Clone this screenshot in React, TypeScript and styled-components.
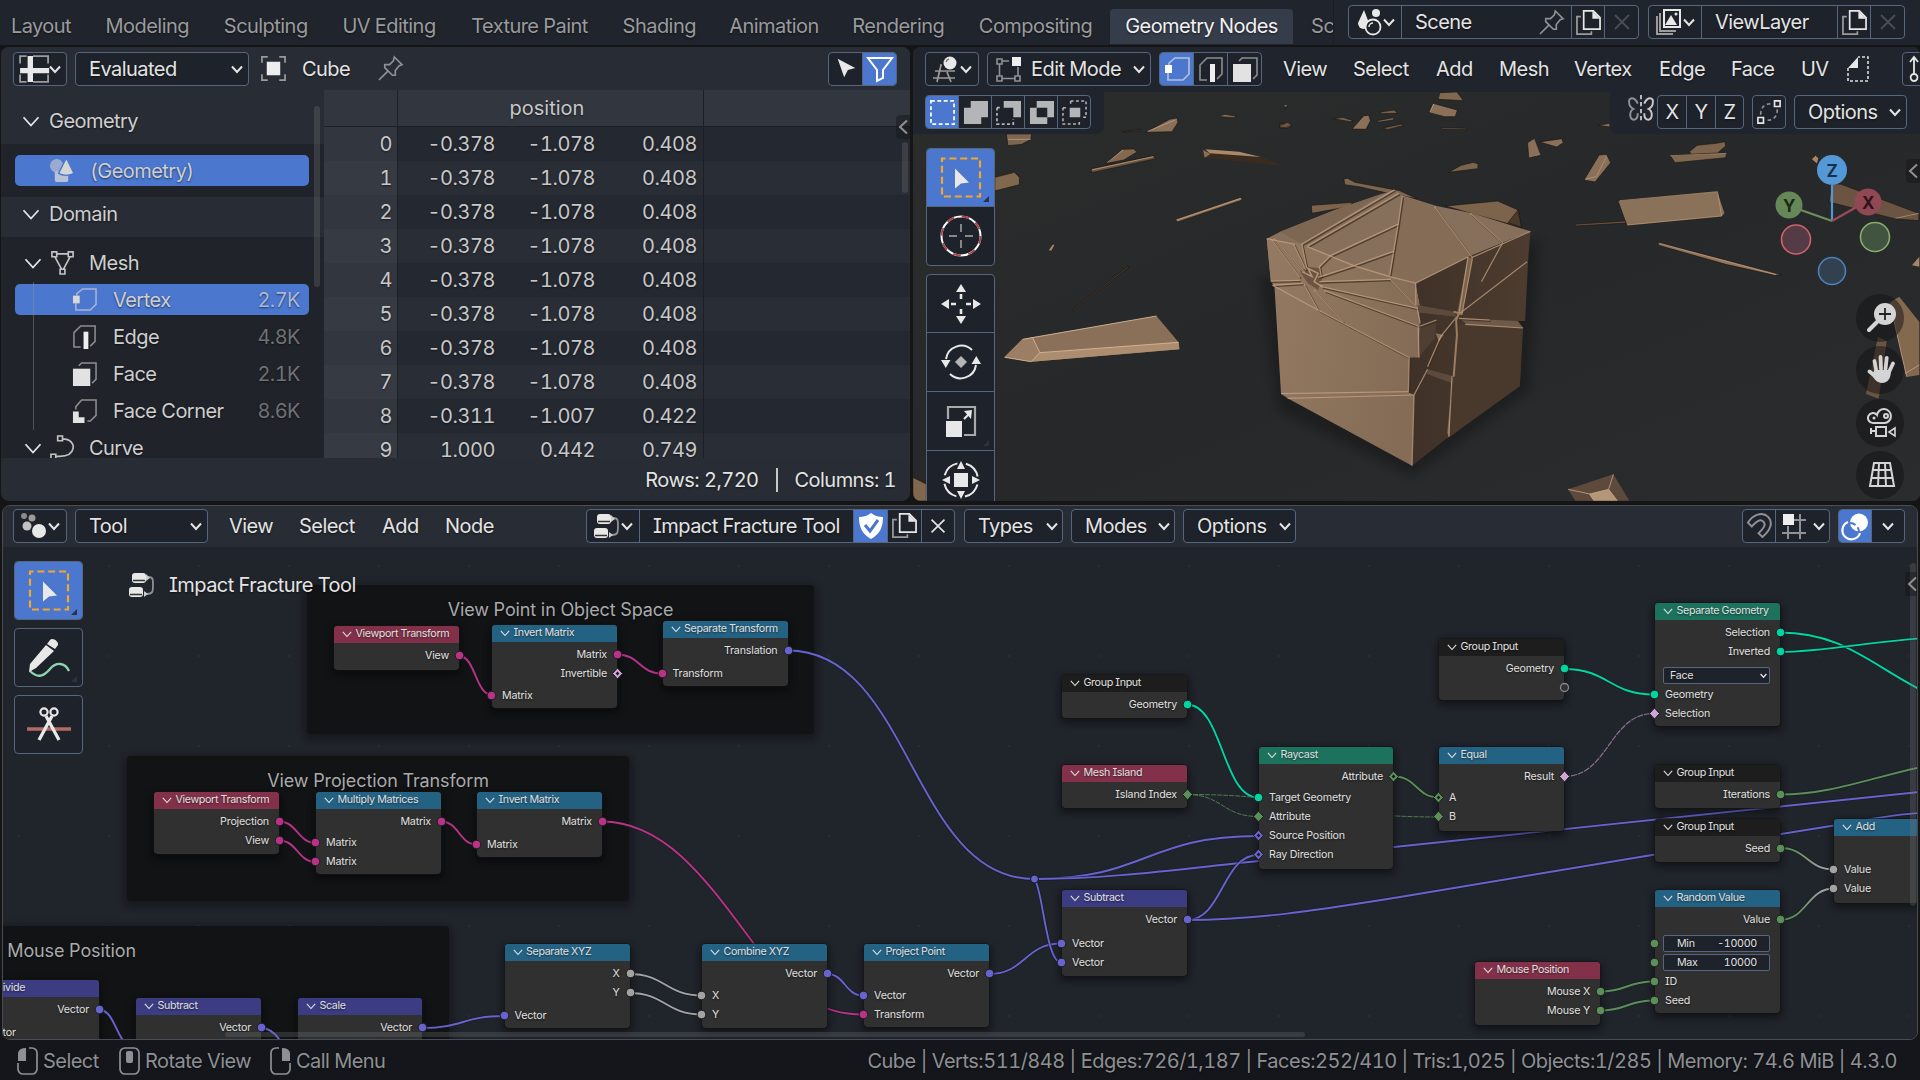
import React from "react";
import styled, { createGlobalStyle, css } from "styled-components";

const c = {
  gap: "#151515",
  bar: "#20242c",
  header: "#282c34",
  field: "#1e222a",
  line: "#56667e",
  blue: "#4b77cf",
  text: "#e4e4e4",
  dim: "#9a9b9d",
};

const Global = createGlobalStyle`
  html, body { margin: 0; background: ${c.gap}; }
  * { box-sizing: border-box; letter-spacing: -0.027em; }
  body { font-family: Inter, "Liberation Sans", sans-serif; font-feature-settings: "cv08"; font-variant-numeric: tabular-nums; font-size: 20px; color: ${c.text}; overflow: hidden; }
  svg { display: block; flex: none; }
`;

/* ---------- Layout ---------- */
const Screen = styled.div`
  width: 1920px; height: 1080px; overflow: hidden; background: ${c.gap};
  display: grid; grid-template-rows: 45px 2px 454px 4px 535px 40px;
  white-space: nowrap; text-shadow: 0 1px 2px rgba(0, 0, 0, 0.55);
`;
const TopBar = styled.header`
  grid-row: 1; display: flex; background: ${c.bar};
`;
const Tabs = styled.nav`
  display: flex; width: 1334px; padding-top: 9px; overflow: hidden; border-right: 1px solid #1a1d23;
`;
const Tab = styled.div<{ $w: number; $on?: boolean; $pr?: number }>`
  flex: none; width: ${p => p.$w}px; height: 35px; display: flex; align-items: center; justify-content: center;
  padding: 0 ${p => p.$pr ?? 0}px 1px 0;
  color: ${p => (p.$on ? "#f2f2f2" : c.dim)}; background: ${p => (p.$on ? "#353c4a" : "transparent")};
  border-radius: 4px 4px 0 0;
`;
const Row2 = styled.main`
  grid-row: 3; display: grid; grid-template-columns: 909px 1007px; column-gap: 3px; padding-left: 1px;
`;
const Editor = styled.section`
  border-radius: 8px; overflow: hidden; display: flex; flex-direction: column; background: ${c.header}; position: relative;
`;
const Header = styled.div<{ $h: number; $pl?: number; $bg?: string }>`
  height: ${p => p.$h}px; flex: none; display: flex; align-items: center; padding-left: ${p => p.$pl ?? 12}px;
  background: ${p => p.$bg ?? c.header};
`;

/* ---------- Controls ---------- */
const Group = styled.div<{ $ml?: number }>`
  display: flex; flex: none; height: 34px; margin-left: ${p => p.$ml ?? 0}px; border-radius: 4px; overflow: hidden;
  border: 1px solid ${c.line}; background: ${c.field};
`;
const Seg = styled.div<{ $w: number; $on?: boolean; $start?: number; $off?: boolean }>`
  width: ${p => p.$w}px; flex: none; display: flex; align-items: center; justify-content: ${p => (p.$start ? "flex-start" : "center")};
  padding-left: ${p => p.$start ?? 0}px; gap: 2px; background: ${p => (p.$on ? c.blue : "transparent")};
  color: ${c.text};
  & + & { border-left: 1px solid ${c.line}; }
  ${p => p.$off && css`color: #4a4e55;`}
`;
const Push = styled.span<{ $r: number }>`margin-left: auto; margin-right: ${p => p.$r}px;`;
const MenuItem = styled.div<{ $w: number }>`width: ${p => p.$w}px; flex: none;`;
const Space = styled.div<{ $w: number }>`width: ${p => p.$w}px; flex: none;`;

const Chev = ({ s = 12, w = 2 }: { s?: number; w?: number }) => (
  <svg width={s} height={s} viewBox="0 0 12 12" fill="none" stroke="#e4e4e4" strokeWidth={w}><path d="M1 3.5 6 9l5-5.5" /></svg>
);

const ico: Record<string, React.ReactNode> = {
  sheet: <><path d="M1 8V1h6M13 1h14v7M1 18v7h6M13 25h14v-7" stroke="#9b9b9b" fill="none" strokeWidth="1.7" /><path d="M8 1h5v24H8zM1 12h27v5H1z" fill="#e8e8e8" /></>,
  object: <><path d="M1 7V1h6M19 1h6v6M25 19v6h-6M7 25H1v-6" stroke="#9b9b9b" fill="none" strokeWidth="1.8" /><path d="M6 6h14v14H6z" fill="#eee" /></>,
  pin: <path d="m17 1 8 8-3 1-4 5 0 5-3 0-8-8 0-3 5 0 4-4zM10 16l-9 9" stroke="#8f9196" fill="none" strokeWidth="1.7" />,
  cursor: <path d="M4 2 23 12l-8 2-4 8z" fill="#e8e8e8" />,
  filter: <path d="M1 2h24l-9 12v8l-6 3V14z" fill="none" stroke="#fff" strokeWidth="2" />,
  vertex: <><path d="M5 9V7l6-5h14v16l-6 6H4v-7" fill="none" stroke="#b9c1d6" strokeWidth="1.6" /><path d="M1 9h7v8H1z" fill="#fff" /></>,
  vertexOut: <><path d="M5 9V7l6-5h14v16l-6 6H4v-7" fill="none" stroke="#a4b4d8" strokeWidth="1.6" /><path d="M1 9h7v8H1z" fill="#d8d8d8" /></>,
  edge: <><path d="M9 24H2V9l7-7h15v16l-5 5" fill="none" stroke="#8d8d90" strokeWidth="1.6" /><path d="M12 8h5v18h-5z" fill="#eee" /></>,
  face: <><path d="M7 5l3-3h15v17l-4 4" fill="none" stroke="#8d8d90" strokeWidth="1.6" /><path d="M1 8h18v18H1z" fill="#e2e2e2" /></>,
  corner: <><path d="M4 12V9l6-7h15v16l-6 6h-3" fill="none" stroke="#8d8d90" strokeWidth="1.6" /><path d="M1 14h6v6h6v6H1z" fill="#e2e2e2" /></>,
  mesh: <path d="M2 2h5v5H2zM19 2h5v5h-5zM10.500 20h5v5h-5zM7 4h12M5 7l7 13M21 7l-7 13" fill="none" stroke="#c4c4c4" strokeWidth="1.7" />,
  curve: <path d="M8 1h5v5H8zM1 20h5v5H1zM13 4c8 0 12 5 11 10-1 6-6 9-18 8" fill="none" stroke="#c4c4c4" strokeWidth="1.7" />,
  geometry: <><circle cx="8" cy="8" r="7" fill="#9aaad0" /><path d="M6 14h14v9a2 2 0 0 1-2 2H8a2 2 0 0 1-2-2z" fill="#b9c1d8" /><path d="m18 0 8 16q-3 2-8 2t-8-2z" fill="#d6d6d4" stroke={c.blue} strokeWidth="1.400" /></>,
  view3d: <><path d="M3 15h20M1 22h22M9 9 5 26M15 16l4 10M8 9h2" stroke="#9b9b9b" fill="none" strokeWidth="1.7" /><circle cx="18" cy="7" r="6.500" fill="#e8e8e8" /><path d="M14 6a4 4 0 0 1 3-3" stroke="#444" fill="none" /></>,
  editmode: <><path d="M1 3h5v5H1zM1 20h5v5H1zM19 20h5v5h-5zM3.500 8v12M6 22.500h13M22 11v9M6 5h7" fill="none" stroke="#8f9196" strokeWidth="1.600" /><path d="M16 1h9v9h-9z" fill="#eee" /></>,
  scene: <><path d="M9 1l5 13a5.500 6 0 1 1-11 0z" fill="#e8e8e8" /><circle cx="21" cy="4" r="4" fill="#e8e8e8" /><circle cx="18" cy="18" r="7.500" fill="#1e222a" stroke="#e8e8e8" strokeWidth="1.800" /><path d="M14 18a4 4 0 0 1 4-4" stroke="#e8e8e8" fill="none" strokeWidth="1.500" /></>,
  layers: <><path d="M2 7v18h16M5 4v18h16" fill="none" stroke="#9b9b9b" strokeWidth="2" /><path d="M9 1h16v17H9z" fill="none" stroke="#e8e8e8" strokeWidth="2" /><path d="m10 16 6-10 6 10z" fill="#e8e8e8" /><circle cx="21" cy="5" r="1.500" fill="#e8e8e8" /></>,
  copy: <><path d="M5 7H1v18h15v-3" fill="none" stroke="#9b9b9b" strokeWidth="1.800" /><path d="M8 1h10l7 7v12H8z" fill="none" stroke="#e8e8e8" strokeWidth="1.800" /><path d="M17 1l8 8h-8z" fill="#e8e8e8" /></>,
  close: <path d="m6 6 14 14M20 6 6 20" stroke="currentColor" strokeWidth="1.800" />,
  mirror: <><path d="M10 8C7 1 1 2 2 7c0 4 2 5 4 6-4 2-4 9 0 10 3 0 4-3 4-6" fill="none" stroke="#8f9196" strokeWidth="1.800" /><path d="M16 8c3-7 9-6 8-1 0 4-2 5-4 6 4 2 4 9 0 10-3 0-4-3-4-6" fill="none" stroke="#c9c9c9" strokeWidth="1.800" /><path d="M13 0v26" stroke="#ddd" strokeWidth="1.500" strokeDasharray="4 2.500" /></>,
  prop: <><path d="M19 1h6v6h-6zM1 19h6v6H1z" fill="none" stroke="#e8e8e8" strokeWidth="1.800" /><path d="M4 16C4 8 8 4 16 4M22 10c0 8-4 12-12 12" fill="none" stroke="#8f9196" strokeWidth="1.800" strokeDasharray="4 3" /></>,
  fold: <><path d="M2 12 12 1v11z" fill="#e8e8e8" /><path d="M2 12v13h20V1H12" fill="none" stroke="#ddd" strokeWidth="1.600" strokeDasharray="3 2" /></>,
  up: <path d="M9 18V1M5 6l4-5 4 5M9 18a3.500 3.500 0 1 0 .1 0" fill="none" stroke="#e8e8e8" strokeWidth="1.800" />,
  selNew: <path d="M1 1h24v24H1z" fill="none" stroke="#fff" strokeWidth="1.800" strokeDasharray="4 2.660" />,
  selAdd: <path d="M8 1h18v17h-7v7H1V8h7z" fill="#b4b5b7" />,
  selSub: <><path d="M8 1h18v17h-8V8H8z" fill="#b4b5b7" /><path d="M1 8h5M1 8v17h17v-5" fill="none" stroke="#b4b5b7" strokeWidth="1.800" strokeDasharray="3 2.500" /></>,
  selDiff: <path fillRule="evenodd" d="M8 1h18v17h-7v7H1V8h7zM8 8v10h11V8z" fill="#b4b5b7" />,
  selInt: <><path d="M8 8h11v10H8z" fill="#b4b5b7" /><path d="M9 1h16v17h-3M9 1v4M1 8h4M1 8v17h17v-4" fill="none" stroke="#b4b5b7" strokeWidth="1.600" strokeDasharray="3 2.500" /></>,
  nodes: <><rect x="4" y="1" width="14" height="10" rx="3" fill="#e8e8e8" /><rect x="1" y="15" width="14" height="10" rx="3" fill="#e8e8e8" /><path d="M5 8.500h12M2 22.500h12" stroke="#333" strokeWidth="1.600" /><path d="M20 5c5 0 5 2 5 8s0 9-6 9" fill="none" stroke="#8f9196" strokeWidth="1.800" /><path d="m18 2 4 4-4 3M16 19l4 3-4 3" fill="#ccc" /></>,
  dots: <><circle cx="4" cy="3" r="3" fill="#8a8a8c" /><circle cx="12" cy="5" r="3.500" fill="#9a9a9c" /><circle cx="7" cy="13" r="4.500" fill="#c2c2c2" /><circle cx="19" cy="18" r="7" fill="#e8e8e8" /></>,
  shield: <><path d="M13 0c4 3 8 4 12 4 0 10-3 17-12 22C4 21 1 14 1 4c4 0 8-1 12-4z" fill="#fff" /><path d="m7 12 5 6 8-11" fill="none" stroke={c.blue} strokeWidth="3" /></>,
  magnet: <path d="M1 10C6 2 16-2 22 4c6 7 2 14-6 21l-4-4c6-6 8-9 5-12-3-3-7-1-12 5z" fill="none" stroke="#8f9196" strokeWidth="2" />,
  snapgrid: <><path d="M7 13v13M19 1v25M1 20h24M13 7h12" stroke="#8f9196" strokeWidth="2" /><path d="M2 1h11v11H2z" fill="#eee" /></>,
  overlay: <><circle cx="17" cy="9.500" r="9" fill="#fff" /><path d="M6 9a9 9 0 1 0 12 11" fill="none" stroke="#fff" strokeWidth="2.200" /><path d="M8 10a9 9 0 0 1 9 9" stroke={c.blue} strokeWidth="2" fill="none" strokeDasharray="6 3" /></>,
};
const Icon = ({ n, s = 26 }: { n: string; s?: number }) => (
  <svg width={s} height={s} viewBox="0 0 26 26" overflow="visible">{ico[n]}</svg>
);

/* ---------- Spreadsheet ---------- */
const SheetBody = styled.div`height: 368px; display: grid; grid-template-columns: 323px 586px; overflow: hidden; position: relative;`;
const Side = styled.div`background: #20242a; overflow: hidden; position: relative;`;
const SecHead = styled.div<{ $h: number; $pt?: number; $pb?: number }>`
  height: ${p => p.$h}px; padding: ${p => p.$pt ?? 0}px 0 ${p => p.$pb ?? 0}px 21px; background: ${c.header}; display: flex; align-items: center; gap: 9px; color: #cfcfcf;
`;
const SecBody = styled.div<{ $h: number; $pt: number }>`height: ${p => p.$h}px; padding: ${p => p.$pt}px 15px 0 14px; position: relative;`;
const Item = styled.div<{ $on?: boolean; $pl: number; $gap: number }>`
  height: 31px; margin-bottom: 6px; border-radius: 5px; display: flex; align-items: center; padding: 0 9px 0 ${p => p.$pl}px; gap: ${p => p.$gap}px;
  background: ${p => (p.$on ? c.blue : "transparent")}; color: #cfcfcf;
`;
const TypeName = styled.span`margin-left: 6px;`;
const Count = styled.span<{ $on?: boolean }>`margin-left: auto; color: ${p => (p.$on ? "#a9b8da" : "#6f7175")};`;
const TreeLine = styled.i`position: absolute; left: 32px; top: 45px; width: 1px; height: 148px; background: rgba(150,150,150,0.4);`;
const ScrollBar = styled.i<{ $x: number; $y: number; $w: number; $h: number }>`
  position: absolute; left: ${p => p.$x}px; top: ${p => p.$y}px; width: ${p => p.$w}px; height: ${p => p.$h}px; border-radius: 3px; background: rgba(120,122,126,0.28);
`;
const Table = styled.div`display: grid; grid-auto-rows: 34px; grid-template-rows: 37px; overflow: hidden; color: #c8c8c8;`;
const TRow = styled.div<{ $alt?: boolean; $head?: boolean }>`
  display: grid; grid-template-columns: 74px 104px 100px 102px 206px; text-align: right; align-items: center;
  background: ${p => (p.$head ? "#32363f" : p.$alt ? "#292d35" : "#242830")};
  border-bottom: ${p => (p.$head ? "1px solid #1c1f25" : "0")};
  & > * { height: 100%; display: flex; align-items: center; justify-content: flex-end; padding-right: 7px; letter-spacing: -0.022em; }
  & > :first-child { background: ${p => (p.$head ? "#32363f" : p.$alt ? "#363a43" : "#32363f")}; border-right: 1px solid #1c1f25; padding-right: 5px; }
  & > :nth-child(4) { border-right: 1px solid #1c1f25; padding-right: 6px; }
`;
const HeadCell = styled.span`grid-column: 2 / 5; border-right: 1px solid #1c1f25; && { justify-content: center; padding-right: 7px; letter-spacing: 0; }`;
const SheetFoot = styled.div`height: 43px; display: flex; align-items: center; justify-content: flex-end; padding-right: 14px; gap: 17px;`;
const Bar = styled.i`width: 2px; height: 24px; background: #c8c8c8;`;
const Collapse = styled.div<{ $y: number; $r?: number }>`
  position: absolute; right: ${p => p.$r ?? 0}px; top: ${p => p.$y}px; width: 14px; height: 24px; border-radius: 4px 0 0 4px; background: rgba(20,20,22,0.45);
  display: flex; align-items: center; justify-content: center;
`;
const LeftChev = () => <svg width="10" height="16" viewBox="0 0 10 16"><path d="M9 1.500 2 8l7 6.500" fill="none" stroke="#8f9092" strokeWidth="2" /></svg>;

const ROWS = [
  ...Array.from({ length: 8 }, () => ["-0.378", "-1.078", "0.408"]),
  ["-0.311", "-1.007", "0.422"],
  ["1.000", "0.442", "0.749"],
];

const Spreadsheet = () => (
  <Editor>
    <Header $h={43}>
      <Group><Seg $w={52}><Icon n="sheet" s={28} /><Chev /></Seg></Group>
      <Group $ml={8}><Seg $w={172} $start={13}>Evaluated<Push $r={5}><Chev /></Push></Seg></Group>
      <Space $w={12} /><Icon n="object" s={25} /><Space $w={16} /><MenuItem $w={76}>Cube</MenuItem><Icon n="pin" s={25} />
      <Group $ml={425}><Seg $w={33}><Icon n="cursor" s={24} /></Seg><Seg $w={34} $on><Icon n="filter" s={26} /></Seg></Group>
    </Header>
    <SheetBody>
      <Side>
        <SecHead $h={54} $pt={8}><Chev s={18} w={1.2} />Geometry</SecHead>
        <SecBody $h={53} $pt={11}><Item $on $pl={34} $gap={16}><Icon n="geometry" s={25} />(Geometry)</Item></SecBody>
        <SecHead $h={40} $pb={6}><Chev s={18} w={1.2} />Domain</SecHead>
        <SecBody $h={240} $pt={10}>
          <Item $pl={9} $gap={8}><Chev s={18} w={1.2} /><Icon n="mesh" s={25} /><TypeName>Mesh</TypeName></Item>
          <Item $on $pl={57} $gap={16}><Icon n="vertexOut" s={25} />Vertex<Count $on>2.7K</Count></Item>
          <Item $pl={57} $gap={16}><Icon n="edge" s={25} />Edge<Count>4.8K</Count></Item>
          <Item $pl={57} $gap={16}><Icon n="face" s={25} />Face<Count>2.1K</Count></Item>
          <Item $pl={57} $gap={16}><Icon n="corner" s={25} />Face Corner<Count>8.6K</Count></Item>
          <Item $pl={9} $gap={8}><Chev s={18} w={1.2} /><Icon n="curve" s={25} /><TypeName>Curve</TypeName></Item>
          <TreeLine />
        </SecBody>
        <ScrollBar $x={313} $y={16} $w={6} $h={181} />
      </Side>
      <Table>
        <TRow $head><span /><HeadCell>position</HeadCell></TRow>
        {ROWS.map((r, i) => (
          <TRow key={i} $alt={i % 2 === 1}><span>{i}</span>{r.map((v, j) => <span key={j}>{v}</span>)}<span /></TRow>
        ))}
      </Table>
      <ScrollBar $x={901} $y={52} $w={6} $h={51} />
    </SheetBody>
    <SheetFoot>Rows: 2,720<Bar />Columns: 1</SheetFoot>
    <Collapse $y={68}><LeftChev /></Collapse>
  </Editor>
);

/* ---------- 3D viewport ---------- */
const ViewBody = styled.div`position: relative; flex: 1; overflow: hidden; background: #292a2b;`;
const SubBar = styled.div<{ $side: "left" | "right"; $w: number }>`
  position: absolute; top: 0; ${p => p.$side}: 0; width: ${p => p.$w}px; height: 42px; background: ${c.bar}; display: flex; padding: 3px 12px 0;
  border-radius: ${p => (p.$side === "left" ? "0 0 8px 0" : "0 0 0 8px")};
`;
const ToolColumn = styled.div<{ $x: number; $y: number }>`
  position: absolute; left: ${p => p.$x}px; top: ${p => p.$y}px; width: 69px; display: flex; flex-direction: column; gap: 8px;
`;
const ToolGroup = styled.div`border: 1px solid ${c.line}; border-radius: 4px; overflow: hidden; background: ${c.field};`;
const Tool = styled.div<{ $on?: boolean; $more?: boolean }>`
  height: 57px; display: flex; align-items: center; justify-content: center; position: relative; background: ${p => (p.$on ? c.blue : "transparent")};
  & + & { border-top: 1px solid ${c.line}; height: 59px; }
  ${p => p.$more && css`&::after { content: ""; position: absolute; right: 5px; bottom: 4px; border: 3px solid transparent; border-right-color: #2c3340; border-bottom-color: #2c3340; }`}
`;
const NavColumn = styled.div`position: absolute; left: 943px; top: 202px; display: grid; gap: 4.300px;`;
const NavBtn = styled.div`width: 48px; height: 48px; border-radius: 50%; background: rgba(18,18,20,0.5); display: grid; place-items: center; padding-left: 3px;`;
const SceneSvg = styled.svg`position: absolute; left: 0; top: 0; path, polyline, polygon { vector-effect: non-scaling-stroke; }`;

const SelectBox = () => (
  <svg width="44" height="44" viewBox="0 0 44 44"><rect x="3" y="2.500" width="38" height="38" fill="none" stroke="#f3a630" strokeWidth="2.200" strokeDasharray="7 3.857" strokeDashoffset="3.500" /><path d="M16 12.500 30 26.500l-8 1-6 5z" fill="#e8e8e8" /></svg>
);
const TOOLS: Record<string, React.ReactNode> = {
  cursor: <><circle cx="22" cy="22" r="19.500" fill="none" stroke="#fff" strokeWidth="2" /><circle cx="22" cy="22" r="19.500" fill="none" stroke="#a4474d" strokeWidth="2" strokeDasharray="7.660" /><path d="M22 10v8M22 26v8M10 22h8M26 22h8" stroke="#a9a9a9" strokeWidth="1.500" /></>,
  move: <><path d="M22 2l5 8H17zM22 42l5-8H17zM2 22l8-5v10zM42 22l-8-5v10z" fill="#e8e8e8" /><path d="M22 12v5M22 27v5M12 22h5M27 22h5" stroke="#e8e8e8" strokeWidth="2.600" /></>,
  rotate: <><path d="M7 19A15.500 15.500 0 0 1 33 10M37 25A15.500 15.500 0 0 1 11 34" fill="none" stroke="#e8e8e8" strokeWidth="2" /><path d="M2 20h9.500l-4.700 8zM32.500 24H42l-4.700-8z" fill="#e8e8e8" /><path d="m22 16 6 6-6 6-6-6z" fill="#b4b4b4" /></>,
  scale: <><path d="M9 20V8h27v28H25" fill="none" stroke="#a9a9a9" strokeWidth="2.200" /><path d="M7 22h16v16H7z" fill="#e8e8e8" /><path d="m25 20 5-5" stroke="#e8e8e8" strokeWidth="2.200" /><path d="m33 11-1 9-7-8z" fill="#e8e8e8" /></>,
  transform: <><circle cx="22" cy="22" r="17" fill="none" stroke="#e8e8e8" strokeWidth="2" strokeDasharray="18 8.700" strokeDashoffset="-4.500" /><path d="M22 3l4 8h-8zM22 41l4-8h-8zM3 22l8-4v8zM41 22l-8-4v8z" fill="#e8e8e8" /><path d="M15 15h14v14H15z" fill="#e8e8e8" /></>,
  draw: <><path d="M3 35c8 8 14 5 20-2s15-7 19 2" fill="none" stroke="#8fd6ae" strokeWidth="2.300" /><path d="M23 4c2-3 9 1 8 5l-3 4-8-5zM19 9l8 6L9 32l-7 4 1-8z" fill="#e8e8e8" /></>,
  cut: <><path d="M0 26h44" stroke="#b36a62" strokeWidth="3.400" /><circle cx="17" cy="9" r="3.600" fill="none" stroke="#e8e8e8" strokeWidth="2.200" /><circle cx="27" cy="9" r="3.600" fill="none" stroke="#e8e8e8" strokeWidth="2.200" /><path d="M19 13 32 37M25 13 12 37" stroke="#e8e8e8" strokeWidth="3.300" /></>,
};
const ToolIcon = ({ n }: { n: string }) => <svg width="44" height="44" viewBox="0 0 44 44">{TOOLS[n]}</svg>;

const EDGE = "#c7a485", SHADE = "#3c2d22";

/* Shards seen on the left part of the floor: [outline, fill] */
const SHARDS_A: [string, string][] = [
  ["236,132 298,132 296,148 274,163 240,167", "#7d6651"],
  ["208,262 256,247 268,262 268,284 208,303", "#80684f"],
  ["578,127 636,88 655,84 656,98 642,125", "#8a7058"],
  ["519,125 566,118 564,122 522,127", "#554538"],
  ["482,220 520,178 548,177 556,186 524,210", "#84694f"],
  ["444,236 596,197 602,206 446,248", "#6b5441"],
  ["760,77 772,73 799,79 795,83 762,80", "#8a7058"],
  ["905,107 925,97 936,106 920,113 906,111", "#6f5743"],
  ["915,46 922,43 926,49 918,52", "#7d6651"],
  ["650,388 810,322 814,330 655,396", "#8e745c"],
  ["338,482 350,462 355,464 347,483", "#a58767"],
  ["397,660 534,528 537,531 400,662", "#493b30"],
  ["1063,266 1072,265 1090,277 1200,302 1242,326 1180,312 1100,290 1065,284", "#7d6651"],
  ["983,346 1085,337 1075,350 985,370", "#7b634c"],
  ["1037,86 1060,82 1086,92 1078,95", "#74604c"],
  ["1083,117 1112,77 1124,76 1128,92 1117,118", "#8a7058"],
  ["1152,66 1186,60 1195,70 1156,71", "#74604c"],
  ["1145,92 1187,82 1184,90 1147,97", "#7a634e"],
  ["1158,114 1204,102 1208,107 1170,119", "#6f5743"],
  ["1300,113 1360,115 1364,119 1304,117", "#74604c"],
  ["1298,8 1340,6 1356,32 1294,28", "#80684f"],
  ["1281,40 1341,60 1336,80 1310,80 1272,68", "#8a7058"],
  ["1513,158 1530,145 1546,196 1516,204", "#8a7058"],
  ["1320,247 1350,226 1380,217 1392,222 1391,236", "#7b634c"],
  ["7,1162 40,1182 40,1233 7,1233", "#80684f"],
  ["1312,348 1440,333 1490,360 1498,412 1380,372", "#7b634c"],
  ["1490,360 1498,412 1465,398", "#4a392c"],
];
/* Shards on the right, in the strip right of the cube */
const SHARDS_B: [string, string][] = [
  ["636,426 690,416 694,428 678,441", "#8a7058"],
  ["745,540 782,465 800,463 810,488 772,546", "#8a7058"],
  ["956,467 1094,459 1092,473 968,488", "#80684f"],
  ["1003,455 1022,436 1068,430 1090,425 1092,438 1072,459 1008,463", "#7b634c"],
  ["828,602 1072,574 1090,640 1082,650 850,677", "#8a7159"],
  ["721,673 845,663 848,669 726,678", "#6b5441"],
  ["925,727 1092,780 1228,824 1212,826 1092,793 928,736", "#8e745c"],
  ["780,376 808,370 808,381", "#8a7058"],
  ["1302,478 1312,466 1320,475 1316,492", "#a58767"],
  ["1345,606 1352,550 1375,553 1565,640 1565,662 1505,656", "#6b5441"],
  ["0,371 30,374 20,384 0,384", "#6f5743"],
];
const SHARDS_C: [string, string][] = [
  ["1470,187 1498,170 1558,246 1558,405 1520,411", "#84694f"],
  ["1434,290 1460,303 1436,476 1398,462", "#6b5441"],
  ["1536,76 1558,50 1558,80", "#a58767"],
  ["504,748 640,703 688,782 526,782", "#5d4a3c"],
  ["568,762 626,748 652,782 582,782", "#b39776"],
];
const CRACKS = [
  "960,462 1187,299", "974,468 1198,310", "1030,497 1196,402 1206,318", "1085,528 1184,484", "1000,562 1085,528", "1196,402 1175,556",
  "1285,350 1378,503", "1372,370 1452,458", "886,448 955,562", "892,446 968,548", "940,462 970,540", "960,462 972,535", "1030,497 1003,530 1008,560",
  "884,573 955,571", "888,586 962,580", "1003,575 1175,568", "965,582 1000,660", "990,600 1062,697", "1008,590 1243,655", "1015,602 1245,708",
  "1175,566 1243,655 1250,700", "1003,662 1223,803 1221,905", "1345,685 1420,690", "1250,708 1290,690", "1340,680 1300,740 1268,830",
];
/* Outer and bevelled edges that catch light without a shadow beside them */
const RIMS = [
  "874,446 940,462", "974,470 1085,526 1175,560 1239,579 1367,501", "925,925 1235,915", "1378,505 1352,675", "1367,501 1345,672",
  "1452,458 1400,575", "1512,515 1345,672", "1360,703 1502,714", "1239,579 1239,645", "1230,1127 1235,915 1268,838", "1328,858 1320,1040",
  "1376,503 1520,424", "909,911 1221,905", "1247,803 1245,708", "888,586 1003,662",
];

const Viewport3D = () => (
  <SceneSvg width="1007" height="409" viewBox="913 92 1007 409">
    <defs>
      <linearGradient id="floor" x1="0" y1="0" x2="1" y2="1"><stop offset="0" stopColor="#2b2c2c" /><stop offset=".5" stopColor="#272829" /><stop offset="1" stopColor="#2b2c2e" /></linearGradient>
      <linearGradient id="lit" x1="0" y1="0" x2="1" y2="0.300"><stop offset="0" stopColor="#947a62" /><stop offset="1" stopColor="#856c56" /></linearGradient>
      <linearGradient id="dark" x1="0" y1="0" x2="1" y2="0"><stop offset="0" stopColor="#3f3128" /><stop offset="1" stopColor="#4d3c2f" /></linearGradient>
      <filter id="soft" x="-30%" y="-30%" width="160%" height="160%"><feGaussianBlur stdDeviation="14" /></filter>
    </defs>
    <rect x="913" y="92" width="1007" height="409" fill="url(#floor)" />
    <g transform="translate(1280 0) scale(0.408163 0.333333)">
      {SHARDS_B.map(([p, f], i) => <polygon key={i} points={p} fill={f} stroke="#17130f" strokeOpacity=".6" />)}
      <path d="M832 602 1072 575M851 675 1082 648 1072 575M956 467 1094 460M930 730 1215 824M1508 655 1565 640M748 538 775 530 800 470" fill="none" stroke={EDGE} strokeOpacity=".6" />
    </g>
    <g transform="translate(1400 240) scale(0.333333)">
      {SHARDS_C.map(([p, f], i) => <polygon key={i} points={p} fill={f} />)}
      <path d="M504 748 570 762 626 748 640 703M568 762 582 782M626 748 652 782M1516 400 1558 375M1470 190 1520 410" fill="none" stroke={EDGE} strokeOpacity=".8" />
    </g>
    <g transform="translate(910 90) scale(0.408163 0.333333)">
      <polygon points="860,560 900,960 1230,1160 1520,900 1540,450" fill="#000" opacity=".25" filter="url(#soft)" />
      {SHARDS_A.map(([p, f], i) => <polygon key={i} points={p} fill={f} stroke="#17130f" strokeOpacity=".6" />)}
      <polygon points="718,178 806,186 868,203 918,229 718,202" fill="#3a2b20" />
      <polygon points="724,178 806,185 860,201 734,190" fill="#a88a6b" />
      <polygon points="718,180 736,192 722,203" fill="#8a7058" />
      <polygon points="231,802 275,748 300,742 604,678 658,757 660,778 298,815" fill="#8a7059" />
      <polygon points="231,802 275,748 300,742 318,788 297,815" fill="#9b7e63" />
      <polygon points="318,788 658,757 660,778 298,815" fill="#ad8d70" />
      <path d="M300 742 318 788 658 757M318 788 297 815M276 748 604 678M232 802 297 815" fill="none" stroke="#dcb897" strokeOpacity=".85" />
      <path d="M483 218 522 180M240 148 296 148M445 240 596 200M655 390 811 325M582 124 650 90M1283 42 1274 66" fill="none" stroke={EDGE} strokeOpacity=".7" />
      <polygon points="907,425 1040,360 1187,299 1206,316 1290,348 1378,370 1520,424 1452,458 1367,501 1239,579 1175,560 884,575 874,446" fill="#87705b" />
      <polygon points="907,425 1060,352 1160,310 960,462" fill="#7d6652" />
      <polygon points="1206,318 1285,350 1378,503 1239,579 1175,556" fill="#856c57" />
      <polygon points="874,446 960,462 1030,497 1090,526 1175,560 1239,579 1252,660 1247,803 1223,803 1221,905 1235,915 1230,1127 925,925 909,911 893,590 884,573" fill="url(#lit)" />
      <polygon points="1239,579 1367,501 1452,458 1520,424 1514,520 1507,693 1490,693 1502,712 1494,888 1322,1040 1312,1048 1230,1127 1235,915 1221,905 1223,803 1247,803 1250,650" fill="url(#dark)" />
      <polygon points="1345,703 1500,714 1494,888 1322,1040 1330,860" fill="#48392c" />
      <polygon points="1345,685 1488,693 1502,714 1365,703" fill="#6f5a4a" />
      <polygon points="1243,645 1335,665 1338,680 1250,668" fill="#5d4a3c" />
      <polygon points="1268,838 1328,858 1326,878 1266,852" fill="#5d4a3c" />
      <polygon points="1367,501 1378,505 1352,675 1340,675" fill="#7b634c" />
      <polygon points="1330,860 1326,878 1322,1040 1316,1030" fill="#7b634c" />
      <polygon points="1250,708 1290,690 1286,745 1247,800" fill="#4f3f32" />
      <polygon points="1288,730 1310,735 1296,755" fill="#8a7058" />
      <polygon points="955,545 975,530 1003,535 1010,565 1000,600 975,580" fill="#6b5441" />
      {CRACKS.map((p, i) => <polyline key={i} points={p} transform="translate(3 4)" fill="none" stroke={SHADE} strokeWidth="1.400" strokeOpacity=".75" />)}
      {[...CRACKS, ...RIMS].map((p, i) => <polyline key={i} points={p} fill="none" stroke={EDGE} strokeWidth="1.200" strokeOpacity=".72" />)}
      <polyline points="1332,665 1345,670 1338,690 1340,735 1332,860" fill="none" stroke="#9b7e63" strokeWidth="2" />
      <polyline points="960,545 985,560 975,535 1000,550 990,575 1010,590" fill="none" stroke={EDGE} strokeWidth="1.500" strokeOpacity=".8" />
    </g>
    <g strokeWidth="2.200">
      <path d="M1832 221v-36" stroke="#5296d8" /><path d="m1832 221-34-12" stroke="#6d8f5d" /><path d="m1832 221 28-16" stroke="#9b4a57" />
    </g>
    <circle cx="1796" cy="239.500" r="14.500" fill="#543b46" stroke="#d0616f" strokeWidth="1.600" />
    <circle cx="1875" cy="237" r="14.500" fill="#415440" stroke="#86ad6d" strokeWidth="1.600" />
    <circle cx="1832" cy="271" r="13.500" fill="#32404f" stroke="#4a81b8" strokeWidth="1.600" />
    <circle cx="1832" cy="170" r="15" fill="#5498d8" /><circle cx="1789" cy="205" r="13.500" fill="#668859" /><circle cx="1868" cy="202" r="13.500" fill="#8f4854" />
    <g fontSize="17" fontWeight="700" textAnchor="middle" style={{ textShadow: "none" }}>
      <text x="1832" y="176.500" fill="#16324d">Z</text><text x="1789" y="211.500" fill="#1c2b16">Y</text><text x="1868" y="208.500" fill="#32121a">X</text>
    </g>
  </SceneSvg>
);

const NAV: React.ReactNode[] = [
  <><circle cx="18" cy="11" r="11" fill="#d4d4d4" /><path d="M10 19 2 27" stroke="#d4d4d4" strokeWidth="4" strokeLinecap="round" /><path d="M18 5v12M12 11h12" stroke="#222" strokeWidth="1.800" /></>,
  <><path d="M8 21 2.500 16.500M9.500 17 7.500 6M14 14l-.5-12M18.500 14l1.200-11M22 17l4-8.500" stroke="#d4d4d4" strokeWidth="3.800" strokeLinecap="round" fill="none" /><path d="M7.500 15H24c0 8-3 13-9 13-5 0-8-4-10-8z" fill="#d4d4d4" /></>,
  <><path d="M6 15a5 5 0 1 1 4-8 7 7 0 1 1 8 8zM9 19h10v9H9zM9 23H4M4 20v6" fill="none" stroke="#d4d4d4" strokeWidth="2" /><circle cx="7" cy="10" r="1.500" fill="#d4d4d4" /><circle cx="19" cy="8" r="2" fill="none" stroke="#d4d4d4" strokeWidth="2" /><path d="m28 20-6 4 6 4z" fill="none" stroke="#d4d4d4" strokeWidth="1.600" /></>,
  <path d="M7 3h16l4 23H3zM5.500 10h19M4 18h22M12 3l-1 23M18 3l1 23" fill="none" stroke="#d4d4d4" strokeWidth="2" />,
];

const View3DEditor = () => (
  <Editor>
    <Header $h={45} $bg={c.bar} style={{ paddingBottom: 2 }}>
      <Group><Seg $w={52}><Icon n="view3d" /><Chev /></Seg></Group>
      <Group $ml={8}><Seg $w={162} $start={8}><Icon n="editmode" s={26} /><Space $w={5} />Edit Mode<Push $r={5}><Chev /></Push></Seg></Group>
      <Group $ml={8}><Seg $w={33} $on><Icon n="vertex" /></Seg><Seg $w={34}><Icon n="edge" /></Seg><Seg $w={34}><Icon n="face" /></Seg></Group>
      <Space $w={21} />
      <MenuItem $w={70}>View</MenuItem><MenuItem $w={83}>Select</MenuItem><MenuItem $w={63}>Add</MenuItem><MenuItem $w={75}>Mesh</MenuItem>
      <MenuItem $w={85}>Vertex</MenuItem><MenuItem $w={72}>Edge</MenuItem><MenuItem $w={70}>Face</MenuItem><MenuItem $w={45}>UV</MenuItem>
      <Icon n="fold" s={26} />
      <Group $ml={30}><Seg $w={40} $start={2}><Icon n="up" /></Seg></Group>
    </Header>
    <ViewBody>
      <Viewport3D />
      <SubBar $side="left" $w={191}>
        <Group><Seg $w={32} $on><Icon n="selNew" s={25} /></Seg><Seg $w={33}><Icon n="selAdd" s={25} /></Seg><Seg $w={33}><Icon n="selSub" s={25} /></Seg><Seg $w={33}><Icon n="selDiff" s={25} /></Seg><Seg $w={33}><Icon n="selInt" s={25} /></Seg></Group>
      </SubBar>
      <SubBar $side="right" $w={310}>
        <Space $w={5} /><Icon n="mirror" s={28} />
        <Group $ml={2}><Seg $w={28}>X</Seg><Seg $w={29}>Y</Seg><Seg $w={28}>Z</Seg></Group>
        <Group $ml={8}><Seg $w={32}><Icon n="prop" s={24} /></Seg></Group>
        <Group $ml={8}><Seg $w={111} $start={13}>Options<Push $r={5}><Chev /></Push></Seg></Group>
      </SubBar>
      <ToolColumn $x={13} $y={56}>
        <ToolGroup><Tool $on $more><SelectBox /></Tool><Tool><ToolIcon n="cursor" /></Tool></ToolGroup>
        <ToolGroup><Tool><ToolIcon n="move" /></Tool><Tool><ToolIcon n="rotate" /></Tool><Tool $more><ToolIcon n="scale" /></Tool><Tool><ToolIcon n="transform" /></Tool></ToolGroup>
      </ToolColumn>
      <NavColumn>{NAV.map((g, i) => <NavBtn key={i}><svg width="30" height="30" viewBox="0 0 30 30">{g}</svg></NavBtn>)}</NavColumn>
      <Collapse $y={67}><LeftChev /></Collapse>
    </ViewBody>
  </Editor>
);

/* ---------- Node editor ---------- */
const OX = 3, OY = 547;
const NodeEditorBox = styled.section`
  grid-row: 5; margin: 0 2px; width: 1916px; border: 1px solid #474c55; border-radius: 8px; overflow: hidden; display: flex; flex-direction: column; background: #20242b;
`;
const Canvas = styled.div`
  position: relative; flex: 1; overflow: hidden;
  background: radial-gradient(circle at 1px 1px, #2b2d2d 1px, transparent 1.500px) 105px 18px / 90px 90px, #20242b;
`;
const Links = styled.svg`position: absolute; left: 0; top: 0;`;
const Frame = styled.div<{ $x: number; $y: number; $w: number; $h: number }>`
  position: absolute; left: ${p => p.$x - OX}px; top: ${p => p.$y - OY}px; width: ${p => p.$w}px; height: ${p => p.$h}px; border-radius: 4px;
  background: #121315; box-shadow: 0 3px 7px 3px rgba(0,0,0,0.3); padding-top: 12px; text-align: center; font-size: 18px; line-height: 25px; color: #a9aaab;
  letter-spacing: -0.006em;
`;
const NodeBox = styled.div<{ $x: number; $y: number; $w: number; $h: number }>`
  position: absolute; left: ${p => p.$x - OX}px; top: ${p => p.$y - OY}px; width: ${p => p.$w}px; height: ${p => p.$h}px; border-radius: 4px;
  background: #303030; box-shadow: 0 0 0 1px rgba(20,20,20,0.6), 0 3px 7px 2px rgba(0,0,0,0.45); font-size: 10.700px; color: #e0e0e0;
`;
const NodeHead = styled.div<{ $c: string }>`
  height: 17px; margin-bottom: 3px; border-radius: 3px 3px 0 0; background: ${p => p.$c}; display: flex; align-items: center; gap: 3.500px; padding: 0 0 1.500px 8px;
  letter-spacing: -0.033em;
`;
const NodeRow = styled.div<{ $out?: boolean; $mt?: number }>`
  position: relative; height: 19px; margin-top: ${p => p.$mt ?? 0}px; display: flex; align-items: center; padding: 0 10px;
  justify-content: ${p => (p.$out ? "flex-end" : "flex-start")}; letter-spacing: -0.018em;
`;
const SocketSvg = styled.svg<{ $out?: boolean }>`position: absolute; top: 3px; ${p => (p.$out ? "right" : "left")}: -7px;`;
const NodeField = styled.div<{ $menu?: boolean }>`
  width: 108px; height: 17px; margin-left: -2px; border: 1px solid ${c.line}; border-radius: 2px; background: ${c.field}; display: flex; align-items: center;
  justify-content: space-between; padding: ${p => (p.$menu ? "0 2px 0 6px" : "0 12px 0 13px")};
`;
const Crumb = styled.div`position: absolute; left: 125px; top: 25px; height: 26px; display: flex; align-items: center; gap: 15px;`;

const K = { pink: "#b83287", vec: "#6763cf", gray: "#a3a3a3", geo: "#00d6a3", int: "#5a8f5a", bool: "#cca6d6", none: "none" };
const HC = { red: "#83314a", blue: "#246283", vec: "#3c3c83", geo: "#1d725e", dark: "#1d1d1d" };

type SocketKind = keyof typeof K;
interface RowT { t?: string; k: SocketKind; out?: boolean; d?: "solid" | "hollow"; mt?: number; field?: [string, string]; menu?: string; bare?: boolean }
interface NodeT { x: number; y: number; w?: number; h: number; t: string; c: string; rows: RowT[] }

const Socket = ({ k, out, d }: { k: SocketKind; out?: boolean; d?: string }) => (
  <SocketSvg $out={out} width="13" height="13" viewBox="0 0 13 13">
    {d ? <><path d="M6.500 1 11.500 6.500 6.500 12 1.500 6.500z" fill={K[k]} stroke="#1b1b1b" />{d === "hollow" && <path d="M6.500 4.500 8.300 6.500 6.500 8.500 4.700 6.500z" fill="#1b1b1b" />}</>
      : <circle cx="6.500" cy="6.500" r={k === "none" ? 4 : 4.300} fill={k === "none" ? "#303030" : K[k]} stroke={k === "none" ? "#8a8a8a" : "#1b1b1b"} strokeWidth={k === "none" ? 1.3 : 1} />}
  </SocketSvg>
);

const o = (t: string, k: SocketKind, x: Partial<RowT> = {}): RowT => ({ t, k, out: true, ...x });
const n = (t: string, k: SocketKind, x: Partial<RowT> = {}): RowT => ({ t, k, ...x });

const NODES: NodeT[] = [
  { x: 334, y: 626, h: 44, t: "Viewport Transform", c: HC.red, rows: [o("View", "pink")] },
  { x: 492, y: 625, h: 83, t: "Invert Matrix", c: HC.blue, rows: [o("Matrix", "pink"), o("Invertible", "bool", { d: "hollow" }), n("Matrix", "pink", { mt: 2.5 })] },
  { x: 662.5, y: 621, h: 65, t: "Separate Transform", c: HC.blue, rows: [o("Translation", "vec"), n("Transform", "pink", { mt: 4 })] },
  { x: 154, y: 792, h: 62, t: "Viewport Transform", c: HC.red, rows: [o("Projection", "pink"), o("View", "pink")] },
  { x: 316, y: 792, h: 82, t: "Multiply Matrices", c: HC.blue, rows: [o("Matrix", "pink"), n("Matrix", "pink", { mt: 2 }), n("Matrix", "pink")] },
  { x: 477, y: 792, h: 65, t: "Invert Matrix", c: HC.blue, rows: [o("Matrix", "pink"), n("Matrix", "pink", { mt: 4 })] },
  { x: -26, y: 980, h: 90, t: "Divide", c: HC.vec, rows: [o("Vector", "vec"), n("Vector", "vec", { mt: 4 })] },
  { x: 136, y: 998, h: 80, t: "Subtract", c: HC.vec, rows: [o("Vector", "vec")] },
  { x: 298, y: 998, h: 80, w: 124, t: "Scale", c: HC.vec, rows: [o("Vector", "vec")] },
  { x: 504.5, y: 944, h: 84, t: "Separate XYZ", c: HC.blue, rows: [o("X", "gray"), o("Y", "gray"), n("Vector", "vec", { mt: 4 })] },
  { x: 702, y: 944, h: 84, t: "Combine XYZ", c: HC.blue, rows: [o("Vector", "vec"), n("X", "gray", { mt: 2.5 }), n("Y", "gray")] },
  { x: 864, y: 944, h: 83, t: "Project Point", c: HC.blue, rows: [o("Vector", "vec"), n("Vector", "vec", { mt: 2.5 }), n("Transform", "pink")] },
  { x: 1062, y: 675, h: 43, t: "Group Input", c: HC.dark, rows: [o("Geometry", "geo")] },
  { x: 1062, y: 765, h: 43, t: "Mesh Island", c: HC.red, rows: [o("Island Index", "int", { d: "solid" })] },
  { x: 1259, y: 747, w: 134, h: 122, t: "Raycast", c: HC.geo, rows: [o("Attribute", "int", { d: "hollow" }), n("Target Geometry", "geo", { mt: 2 }), n("Attribute", "int", { d: "solid" }), n("Source Position", "vec", { d: "hollow" }), n("Ray Direction", "vec", { d: "hollow" })] },
  { x: 1062, y: 890, h: 86, t: "Subtract", c: HC.vec, rows: [o("Vector", "vec"), n("Vector", "vec", { mt: 4.5 }), n("Vector", "vec")] },
  { x: 1439, y: 639, h: 61, t: "Group Input", c: HC.dark, rows: [o("Geometry", "geo"), o("", "none")] },
  { x: 1439, y: 747, h: 84, t: "Equal", c: HC.blue, rows: [o("Result", "bool", { d: "solid" }), n("A", "int", { d: "hollow", mt: 2 }), n("B", "int", { d: "solid" })] },
  { x: 1655, y: 603, h: 123, t: "Separate Geometry", c: HC.geo, rows: [o("Selection", "geo"), o("Inverted", "geo"), { k: "none", bare: true, menu: "Face", mt: 4.5 }, n("Geometry", "geo"), n("Selection", "bool", { d: "solid" })] },
  { x: 1655, y: 765, h: 43, t: "Group Input", c: HC.dark, rows: [o("Iterations", "int")] },
  { x: 1655, y: 819, h: 43, t: "Group Input", c: HC.dark, rows: [o("Seed", "int")] },
  { x: 1655, y: 890, h: 123, t: "Random Value", c: HC.blue, rows: [o("Value", "int"), { k: "int", field: ["Min", "-10000"], mt: 4.5 }, { k: "int", field: ["Max", "10000"] }, n("ID", "int"), n("Seed", "int")] },
  { x: 1834, y: 819, h: 84, t: "Add", c: HC.blue, rows: [n("Value", "gray", { mt: 24 }), n("Value", "gray")] },
  { x: 1475, y: 962, h: 63, t: "Mouse Position", c: HC.red, rows: [o("Mouse X", "int"), o("Mouse Y", "int")] },
];

const link = (x1: number, y1: number, x2: number, y2: number) => {
  const h = Math.abs(x2 - x1) * 0.5;
  return `M${x1} ${y1}C${x1 + h} ${y1} ${x2 - h} ${y2} ${x2} ${y2}`;
};
const LINKS: { d: string; c: string; w?: number; dash?: string }[] = [
  { d: link(459, 656, 492, 695), c: K.pink }, { d: link(617, 654.5, 662, 673.5), c: K.pink },
  { d: link(279, 821.5, 316, 843), c: K.pink }, { d: link(279, 840.5, 316, 862), c: K.pink }, { d: link(441, 821.5, 477, 844.5), c: K.pink },
  { d: "M602 821.500C666 821.500 708 882 754 944C792 996 822 1014.500 863 1014.500", c: K.pink }, { d: link(788, 650.5, 1034.5, 879), c: K.vec },
  { d: link(629, 974, 702, 995.5), c: K.gray }, { d: link(629, 993, 702, 1014.5), c: K.gray },
  { d: link(422, 1028, 504, 1016), c: K.vec }, { d: link(827, 974, 863, 995.5), c: K.vec }, { d: link(989, 974, 1061, 943.5), c: K.vec },
  { d: "M1034.500 879C1043 890 1046 962 1061 962.500", c: K.vec }, { d: link(1034.5, 879, 1258, 836), c: K.vec },
  { d: "M1034.500 879C1110 879 1180 869 1259 861L1394 847 1919 792", c: K.vec },
  { d: link(1187, 920, 1258, 855), c: K.vec }, { d: "M1187 920C1260 920 1330 908 1400 897L1655 854.500 1834 825.500Q1890 815 1919 813", c: K.vec },
  { d: link(1187, 704.5, 1258, 797.5), c: K.geo }, { d: link(1187, 794.5, 1258, 816.5), c: K.int, w: 1, dash: "5 1" },
  { d: link(1187, 794.5, 1439, 817), c: K.int, w: 1, dash: "5 1" }, { d: link(1394, 776.5, 1439, 797.5), c: K.int },
  { d: link(1564, 669, 1654, 694.5), c: K.geo }, { d: link(1564, 776.5, 1654, 713.5), c: "#a585ad", w: 1.2, dash: "6 1" },
  { d: "M1780 632.500C1840 632.500 1868 662 1919 689", c: K.geo }, { d: "M1780 652C1820 652 1870 642 1919 638.500", c: K.geo },
  { d: "M1780 794.500C1830 794.500 1870 778 1919 767.500", c: K.int },
  { d: link(1780, 848, 1834, 869.5), c: "url(#ig)" }, { d: link(1780, 920, 1834, 888.5), c: "url(#ig)" },
  { d: link(1600, 991.5, 1654, 981.5), c: K.int }, { d: link(1600, 1010.500, 1654, 1000.5), c: K.int },
  { d: "M99 1010C112 1010 114 1028 124 1042", c: K.vec }, { d: "M261 1028C270 1028 276 1034 281 1042", c: K.vec },
];

const NodeView = ({ v }: { v: NodeT }) => (
  <NodeBox $x={v.x} $y={v.y} $w={v.w ?? 125} $h={v.h}>
    <NodeHead $c={v.c}><Chev s={10} w={1.3} />{v.t}</NodeHead>
    {v.rows.map((r, i) => (
      <NodeRow key={i} $out={r.out} $mt={r.mt}>
        {!r.bare && <Socket k={r.k} out={r.out} d={r.d} />}
        {r.menu && <NodeField $menu>{r.menu}<Chev s={7} w={2.2} /></NodeField>}
        {r.field && <NodeField><span>{r.field[0]}</span><span>{r.field[1]}</span></NodeField>}
        {r.t}
      </NodeRow>
    ))}
  </NodeBox>
);

const NodeEditor = () => (
  <NodeEditorBox>
    <Header $h={41} $pl={10} style={{ paddingBottom: 2 }}>
      <Group><Seg $w={52}><Icon n="dots" /><Chev /></Seg></Group>
      <Group $ml={8}><Seg $w={131} $start={13}>Tool<Push $r={5}><Chev /></Push></Seg></Group>
      <Space $w={21} /><MenuItem $w={70}>View</MenuItem><MenuItem $w={83}>Select</MenuItem><MenuItem $w={63}>Add</MenuItem><MenuItem $w={141}>Node</MenuItem>
      <Group><Seg $w={52}><Icon n="nodes" /><Chev /></Seg><Seg $w={214} $start={13}>Impact Fracture Tool</Seg><Seg $w={34} $on><Icon n="shield" /></Seg><Seg $w={34}><Icon n="copy" s={25} /></Seg><Seg $w={33}><Icon n="close" s={24} /></Seg></Group>
      <Group $ml={9}><Seg $w={97} $start={13}>Types<Push $r={4}><Chev /></Push></Seg></Group>
      <Group $ml={8}><Seg $w={102} $start={13}>Modes<Push $r={4}><Chev /></Push></Seg></Group>
      <Group $ml={8}><Seg $w={111} $start={13}>Options<Push $r={4}><Chev /></Push></Seg></Group>
      <Group $ml={446}><Seg $w={32}><Icon n="magnet" s={25} /></Seg><Seg $w={54}><Icon n="snapgrid" s={26} /><Space $w={2} /><Chev /></Seg></Group>
      <Group $ml={8}><Seg $w={32} $on><Icon n="overlay" /></Seg><Seg $w={33}><Chev /></Seg></Group>
    </Header>
    <Canvas>
      <Frame $x={307} $y={585} $w={507} $h={149}>View Point in Object Space</Frame>
      <Frame $x={127} $y={756} $w={502} $h={145}>View Projection Transform</Frame>
      <Frame $x={-150} $y={926} $w={599} $h={160} style={{ textAlign: "right", paddingRight: 313 }}>Normalize Mouse Position</Frame>
      <Links width="1914" height="492" viewBox={`${OX} ${OY} 1914 492`}>
        <defs><linearGradient id="ig" gradientUnits="userSpaceOnUse" x1="1785" y1="0" x2="1832" y2="0"><stop offset="0.200" stopColor={K.int} /><stop offset="0.800" stopColor={K.gray} /></linearGradient></defs>
        {LINKS.map((l, i) => <React.Fragment key={i}>
          {!l.w && <path d={l.d} fill="none" stroke="#15171b" strokeOpacity=".6" strokeWidth={3.4} />}
          <path d={l.d} fill="none" stroke={l.c} strokeWidth={l.w ?? 1.9} strokeDasharray={l.dash} strokeOpacity={l.w ? 0.8 : 1} />
        </React.Fragment>)}
        <circle cx="1034.500" cy="879" r="4" fill={K.vec} stroke="#15171b" />
      </Links>
      {NODES.map((v, i) => <NodeView key={i} v={v} />)}
      <Crumb><Icon n="nodes" s={26} />Impact Fracture Tool</Crumb>
      <ToolColumn $x={11} $y={14}>
        <ToolGroup><Tool $on $more><SelectBox /></Tool></ToolGroup>
        <ToolGroup><Tool $more><ToolIcon n="draw" /></Tool></ToolGroup>
        <ToolGroup><Tool><ToolIcon n="cut" /></Tool></ToolGroup>
      </ToolColumn>
      <ScrollBar $x={222} $y={485} $w={1080} $h={5} />
      <ScrollBar $x={1907} $y={16} $w={6} $h={343} />
      <Collapse $y={25} $r={-2}><LeftChev /></Collapse>
    </Canvas>
  </NodeEditorBox>
);

/* ---------- Status bar ---------- */
const Status = styled.footer`grid-row: 6; background: #14161b; display: flex; align-items: center; padding: 1px 23px 0 17px; color: #8e9093;`;
const Hint = styled.div<{ $w: number }>`display: flex; align-items: center; gap: 5px; width: ${p => p.$w}px;`;
const Stats = styled.div`margin-left: auto; white-space: pre; letter-spacing: -0.025em;`;
const Mouse = ({ b }: { b: number }) => (
  <svg width="21" height="28" viewBox="0 0 21 28" fill="none" stroke="#8e9093" strokeWidth="1.700">
    {b === 0 && <><path d="M12 1h3a5 5 0 0 1 5 5v16a5 5 0 0 1-5 5H6a5 5 0 0 1-5-5v-6" /><path d="M9 1v13H1V6q1-5 8-5z" fill="#8e9093" stroke="none" /></>}
    {b === 1 && <><rect x="1" y="1" width="19" height="26" rx="5" /><rect x="7" y="4" width="7" height="12" rx="2" fill="#8e9093" stroke="none" /></>}
    {b === 2 && <><path d="M9 1H6a5 5 0 0 0-5 5v16a5 5 0 0 0 5 5h9a5 5 0 0 0 5-5v-6" /><path d="M12 1v13h8V6q-1-5-8-5z" fill="#8e9093" stroke="none" /></>}
  </svg>
);

const TABS: [string, number][] = [["Layout", 88], ["Modeling", 118.5], ["Sculpting", 118.5], ["UV Editing", 128], ["Texture Paint", 153], ["Shading", 106.5], ["Animation", 123], ["Rendering", 125.5], ["Compositing", 149], ["Geometry Nodes", 183], ["Scripting", 116]];

export default function App() {
  return (
    <>
      <Global />
      <Screen>
        <TopBar>
          <Tabs>{TABS.map(([t, w], i) => <Tab key={t} $w={w} $on={i === 9} $pr={i === 0 ? 6 : 0}>{t}</Tab>)}</Tabs>
          <Space $w={14} />
          <Header $h={44} $pl={0} $bg="transparent">
            <Group><Seg $w={52}><Icon n="scene" /><Chev /></Seg><Seg $w={170} $start={13}>Scene<Push $r={7}><Icon n="pin" s={25} /></Push></Seg><Seg $w={33}><Icon n="copy" s={25} /></Seg><Seg $w={34} $off><Icon n="close" s={26} /></Seg></Group>
            <Group $ml={9}><Seg $w={52}><Icon n="layers" /><Chev /></Seg><Seg $w={136} $start={13}>ViewLayer</Seg><Seg $w={33}><Icon n="copy" s={25} /></Seg><Seg $w={34} $off><Icon n="close" s={26} /></Seg></Group>
          </Header>
        </TopBar>
        <Row2><Spreadsheet /><View3DEditor /></Row2>
        <NodeEditor />
        <Status>
          <Hint $w={102}><Mouse b={0} />Select</Hint>
          <Hint $w={151}><Mouse b={1} />Rotate View</Hint>
          <Hint $w={130}><Mouse b={2} />Call Menu</Hint>
          <Stats>Cube | Verts:511/848 | Edges:726/1,187 | Faces:252/410 | Tris:1,025 | Objects:1/285 | Memory: 74.6 MiB | 4.3.0</Stats>
        </Status>
      </Screen>
    </>
  );
}
